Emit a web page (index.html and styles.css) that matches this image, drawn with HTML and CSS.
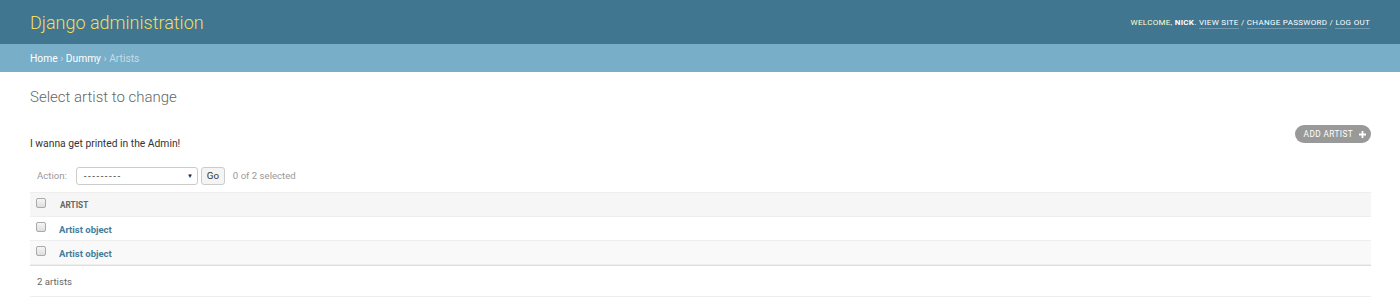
FILE: index.html
```
<!DOCTYPE html>
<html lang="en">
<head>
  <meta charset="UTF-8" />
  <title>Select artist to change | Django site admin</title>
  <link rel="stylesheet" href="styles.css">
</head>
<body>
  <div class="header">
    <div class="branding">Django administration</div>
    <div class="user-tools">
      Welcome, <strong>Nick</strong>.
      <a href="#">View site</a> /
      <a href="#">Change password</a> /
      <a href="#">Log out</a>
    </div>
  </div>

  <div class="breadcrumbs">
    <a href="#">Home</a> › <a href="#">Dummy</a> › Artists
  </div>

  <div class="content">
    <h1>Select artist to change</h1>

    <div class="top-row">
      <p class="custom-note">I wanna get printed in the Admin!</p>
      <a href="#" class="addlink">Add artist
        <svg width="7" height="7" viewBox="0 0 7 7"><path d="M2.6 0h1.8v2.6H7v1.8H4.4V7H2.6V4.4H0V2.6h2.6z" fill="#fff"/></svg>
      </a>
    </div>

    <div class="actions">
      <label>Action:</label>
      <span class="select-wrap">
        <select>
          <option>---------</option>
          <option>Delete selected artists</option>
        </select>
        <span class="arrow">▼</span>
      </span>
      <button class="go">Go</button>
      <span class="counter">0 of 2 selected</span>
    </div>

    <table class="result-list">
      <thead>
        <tr>
          <th class="check"><input type="checkbox"></th>
          <th class="col">Artist</th>
        </tr>
      </thead>
      <tbody>
        <tr class="row1">
          <td class="check"><input type="checkbox"></td>
          <th><a href="#">Artist object</a></th>
        </tr>
        <tr class="row2">
          <td class="check"><input type="checkbox"></td>
          <th><a href="#">Artist object</a></th>
        </tr>
      </tbody>
    </table>

    <p class="paginator">2 artists</p>
  </div>
</body>
</html>
```

FILE: styles.css
```
body {
  margin: 0;
  font-family: Roboto, "Liberation Sans", sans-serif;
  color: #333;
  background: #fff;
}

a {
  text-decoration: none;
}

.header {
  height: 44px;
  padding: 0 30px;
  background: #417690;
  display: flex;
  align-items: center;
  justify-content: space-between;
}

.branding {
  font-size: 18px;
  font-weight: 300;
  color: #f5dd5d;
  margin-top: 1px;
}

.user-tools {
  font-size: 8px;
  letter-spacing: 0.3px;
  text-transform: uppercase;
  color: #ffc;
  margin-top: 1px;
}

.user-tools strong {
  font-weight: bold;
  color: #fff;
}

.user-tools a {
  color: #fff;
  border-bottom: 1px solid rgba(255, 255, 255, 0.25);
  padding-bottom: 1px;
}

.breadcrumbs {
  height: 28px;
  line-height: 29px;
  padding: 0 30px;
  background: #79aec8;
  color: #c4dce8;
  font-size: 10.25px;
}

.breadcrumbs a {
  color: #fff;
}

.content {
  padding: 15px 30px 0 30px;
  margin-right: -1px;
}

h1 {
  margin: 0;
  font-size: 15px;
  line-height: 20px;
  font-weight: 300;
  color: #666;
}

.top-row {
  display: flex;
  justify-content: space-between;
  align-items: flex-start;
  margin-top: 18px;
  height: 25px;
}

.custom-note {
  margin: 13px 0 0 0;
  font-size: 10.3px;
  line-height: 12px;
  color: #333;
}

.addlink {
  display: flex;
  align-items: center;
  gap: 6px;
  height: 18px;
  padding: 0 5px 0 9px;
  border-radius: 9px;
  background: #999;
  color: #fff;
  font-size: 8.25px;
  letter-spacing: 0.4px;
  text-transform: uppercase;
}

.actions {
  display: flex;
  align-items: center;
  height: 25px;
  margin-top: 13px;
  padding: 0 7px;
  color: #999;
  font-size: 9.6px;
}

.actions label {
  margin-right: 9px;
}

.select-wrap {
  position: relative;
  display: inline-block;
}

.select-wrap select {
  appearance: none;
  -webkit-appearance: none;
  width: 122px;
  height: 18px;
  padding: 0 7px;
  border: 1px solid #ccc;
  border-radius: 3px;
  background: #fff;
  font-family: Roboto, "Liberation Sans", sans-serif;
  font-size: 9.75px;
  letter-spacing: 1.5px;
  color: #333;
  display: block;
}

.select-wrap .arrow {
  position: absolute;
  right: 5px;
  top: 5px;
  font-size: 6px;
  color: #222;
  pointer-events: none;
}

.go {
  height: 18px;
  width: 24px;
  margin-left: 3px;
  padding: 0;
  border: 1px solid #ccc;
  border-radius: 3px;
  background: #f4f4f4;
  font-family: Roboto, "Liberation Sans", sans-serif;
  font-size: 9.75px;
  color: #333;
}

.counter {
  margin-left: 8px;
}

.result-list {
  width: 100%;
  border-collapse: collapse;
  margin-top: 4px;
}

.result-list thead th {
  height: 23px;
  background: #f6f6f6;
  border-top: 1px solid #eee;
  border-bottom: 1px solid #eee;
  font-size: 8.25px;
  color: #666;
  text-transform: uppercase;
  text-align: left;
  padding: 0;
}

.result-list thead th.col {
  padding-left: 7px;
}

.result-list .check {
  width: 17px;
  padding: 0 0 0 6px;
}

.result-list tbody td,
.result-list tbody th {
  height: 22px;
  padding: 1px 0 0 6px;
  border-bottom: 1px solid #eee;
  text-align: left;
  font-size: 9.5px;
}

.result-list tbody td.check {
  padding: 0 0 0 6px;
}

.result-list tbody th a {
  color: #447e9b;
  font-weight: bold;
}

.row1 {
  background: #fff;
}

.row2 {
  background: #f9f9f9;
}

input[type="checkbox"] {
  appearance: none;
  -webkit-appearance: none;
  width: 10px;
  height: 10px;
  margin: 0;
  display: block;
  border: 1px solid #aaa;
  border-radius: 2px;
  background: linear-gradient(#f6f6f6, #dedede);
  position: relative;
  top: -2px;
}

.paginator {
  margin: 0;
  height: 30px;
  line-height: 32px;
  padding: 0 7px;
  border-top: 1px solid #ddd;
  border-bottom: 1px solid #eee;
  color: #666;
  font-size: 9.6px;
}
```
